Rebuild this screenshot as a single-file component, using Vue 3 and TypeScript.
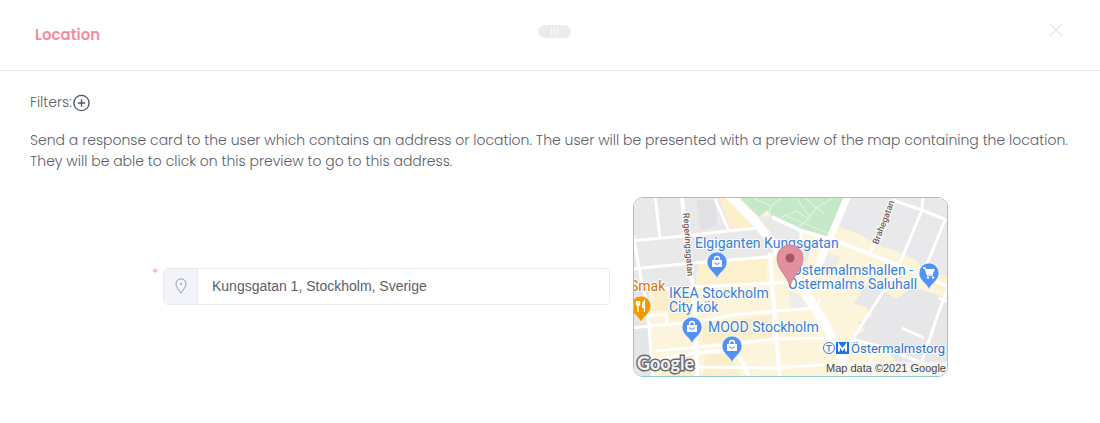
<script setup lang="ts">
import { ref } from 'vue'

interface Pin {
  x: number
  y: number
  kind: 'bag' | 'cart' | 'food'
}

interface Place {
  x: number
  y: number
  text: string
  kind: string
}

const address = ref('Kungsgatan 1, Stockholm, Sverige')

const minorRoads: string[] = [
  'M22 -2L27 41',
  'M-2 44L60 38L122 31',
  'M0 38L8 82L12 98L16 130L20 182',
  'M-2 72L60 66L135 60',
  'M82 2L96 34',
  'M28 92L60 90L162 85',
  'M-2 131L17 129M14 119L33 117L34 127',
  'M17 129L64 125L100 118L142 114L183 111L187 102',
  'M22 154L90 148L142 142L205 141',
  'M60 170L142 171L200 167',
  'M147 48L138 62',
  'M168 35L168 46',
  'M259 4L237 56',
  'M259 3L289 13L316 24',
  'M290 -2L289 13L264 73L219 143',
  'M312 23L296 62L286 84',
  'M316 88L304 120L283 182',
  'M306 101L316 105',
  'M269 131L291 141',
  'M219 142L252 151L287 165L316 177',
  'M245 150L230 178',
]

const midRoads: string[] = [
  'M49 -2L52 33L60 92L63 138L64 182',
  'M137 56L140 100L143 138L147 182',
  'M139 20L169 34L209 46L252 63L316 90',
  'M22 164L60 156L92 153Q103 153 108 163L116 180',
]

const pins: Pin[] = [
  { x: 84, y: 65, kind: 'bag' },
  { x: 296, y: 76, kind: 'cart' },
  { x: 59, y: 130, kind: 'bag' },
  { x: 99, y: 149, kind: 'bag' },
  { x: 8, y: 109, kind: 'food' },
]

const places: Place[] = [
  { x: 62, y: 51, text: 'Elgiganten Kungsgatan', kind: 'shop' },
  { x: 159, y: 78, text: 'Östermalmshallen -', kind: 'shop' },
  { x: 155, y: 92, text: 'Östermalms Saluhall', kind: 'shop' },
  { x: 36, y: 101, text: 'IKEA Stockholm', kind: 'shop' },
  { x: 36, y: 115, text: 'City kök', kind: 'shop' },
  { x: 75, y: 135, text: 'MOOD Stockholm', kind: 'shop' },
  { x: 218, y: 156, text: 'Östermalmstorg', kind: 'station' },
  { x: -3, y: 94, text: 'Smak', kind: 'eat' },
]
</script>

<template>
  <section class="card">
    <header class="card-header">
      <h1 class="title">Location</h1>
      <button class="drag" type="button" aria-label="Move card">
        <i></i><i></i><i></i>
      </button>
      <button class="close" type="button" aria-label="Close">
        <svg viewBox="0 0 14 14" width="14" height="14"><path d="M1 1L13 13M13 1L1 13" /></svg>
      </button>
    </header>

    <div class="card-body">
      <div class="filters">
        <span>Filters:</span>
        <button class="add" type="button" aria-label="Add filter">
          <svg viewBox="0 0 18 18" width="18" height="18">
            <circle cx="9.5" cy="9" r="7.6" />
            <path d="M9.5 5.2V12.8M5.7 9H13.3" />
          </svg>
        </button>
      </div>

      <p class="intro">
        Send a response card to the user which contains an address or location. The user will be
        presented with a preview of the map containing the location. They will be able to click on
        this preview to go to this address.
      </p>

      <div class="row">
        <div class="field">
          <label class="required" for="address" aria-label="Address">*</label>
          <div class="input-group">
            <span class="prefix">
              <svg viewBox="0 0 12 16" width="12" height="16">
                <path d="M6 15.2C4.6 12.6 1 9.4 1 5.9A5 5 0 0 1 11 5.9C11 9.4 7.4 12.6 6 15.2Z" />
                <circle cx="6" cy="5.8" r="0.7" />
              </svg>
            </span>
            <input id="address" v-model="address" type="text" />
          </div>
        </div>

        <div class="map">
          <svg viewBox="1 1 313 178" role="img" aria-label="Map of Kungsgatan 1, Stockholm">
            <rect width="315" height="180" fill="#fdf4dc" />
            <path d="M0 0H98L122 25L148 56L135 58L100 62L66 66L62 90H0Z" fill="#e9e9ea" />
            <path d="M64 3H82L84 29L67 34Z" fill="#dfe1e4" />
            <path d="M86 0H100L120 25L117 30L98 33Z" fill="#fcefca" />
            <path d="M66 68L134 61V85L64 89Z" fill="#fdf0cd" />
            <path d="M0 90H12L16 96V118L20 180H0Z" fill="#e5e6e9" />
            <path d="M120 22L138 18L168 34V45L178 51L172 72L150 55Z" fill="#e9e9ea" />
            <path d="M190 54L207 60L199 78L185 76Z" fill="#ececec" />
            <path d="M156 94L166 98L176 111L158 114Z" fill="#ececec" />
            <path d="M213 0H315V88L292 78L284 64L263 54L250 50L239 45L226 37L206 30Z" fill="#e9e9eb" />
            <path d="M286 70L315 80V98L292 84Z" fill="#fdf0cd" />
            <path d="M233 88L249 93L263 102L280 90L315 101V180H276L252 151L218 142L232 133L225 126L239 119L233 110L221 107Z" fill="#e7e7e9" />
            <path d="M22 95H58L61 121L37 123L34 114H18ZM70 126L139 118V140L69 147ZM28 166L60 159V180H28ZM72 158L95 157L109 180H70Z" fill="#fbeecb" />
            <path d="M106 0H213L199 41L175 36L147 22L139 19L134 13L126 20Z" fill="#c5e8c6" />
            <g class="path">
              <path d="M120 1L138 9L149 1M138 9L136 18M147 21L163 14L176 22L183 11L200 1M163 0L178 22M171 0L191 17M151 18L165 24L200 38M176 22L166 30" />
            </g>
            <g class="road minor"><path v-for="d in minorRoads" :key="d" :d="d" /></g>
            <g class="road middle"><path v-for="d in midRoads" :key="d" :d="d" /></g>
            <path class="road avenue" d="M216 -4L184 72L170 88" />
            <path class="road major" d="M94 -4L122 24L145 52L170 92L193 129L221 182" />

            <text class="street" transform="translate(50 16) rotate(86)">Regeringsgatan</text>
            <text class="street" transform="translate(245 48) rotate(-69)">Brahegatan</text>

            <g v-for="pin in pins" :key="`${pin.x}-${pin.y}`" :transform="`translate(${pin.x} ${pin.y})`">
              <path
                d="M0 17C-1 11 -10 8 -10 0A10 10 0 0 1 10 0C10 8 1 11 0 17Z"
                :fill="pin.kind === 'food' ? '#f29900' : '#5491f5'"
                stroke="#fff"
                stroke-width="0.6"
              />
              <g v-if="pin.kind === 'bag'">
                <path d="M-5 -2H5V5H-5Z" fill="#fff" />
                <path d="M-2.5 -2V-3A2.5 2.5 0 0 1 2.5 -3V-2" fill="none" stroke="#fff" stroke-width="1.3" />
                <path d="M-2.5 0.5Q0 4 2.5 0.5" fill="none" stroke="#5491f5" stroke-width="1.2" />
              </g>
              <g v-else-if="pin.kind === 'cart'">
                <path d="M-6 -5H-4L-1.5 2H4" fill="none" stroke="#fff" stroke-width="1.4" />
                <path d="M-3.5 -4H6L4 1H-2Z" fill="#fff" />
                <circle cx="-1" cy="4.5" r="1.2" fill="#fff" />
                <circle cx="4" cy="4.5" r="1.2" fill="#fff" />
              </g>
              <path
                v-else
                d="M-4.5 -5V-1.5Q-3 0.5 -1.5 -1.5V-5M-3 -5V6M3.4 6V-5Q1 -3 1.8 1H3.4"
                fill="none"
                stroke="#fff"
                stroke-width="1.4"
              />
            </g>

            <text v-for="p in places" :key="p.text" :x="p.x" :y="p.y" :class="['place', p.kind]">{{ p.text }}</text>

            <circle cx="196" cy="151" r="5.5" fill="#fff" stroke="#3b78d8" />
            <path d="M193.2 148.5H198.8M196 148.5V154.5" stroke="#3b78d8" stroke-width="1.2" />
            <rect x="203" y="145" width="13" height="12" fill="#1a73e8" />
            <path d="M206 154.5V148L209.5 152.5L213 148V154.5" fill="none" stroke="#fff" stroke-width="2" />

            <path d="M157 90C155 79 144 73 144 61A13 13 0 0 1 170 61C170 73 159 79 157 90Z" fill="#e2909d" stroke="#c97d8b" stroke-width="0.8" />
            <circle cx="157" cy="61" r="4.5" fill="#a35765" />

            <text class="logo" x="4" y="173">Google</text>
            <rect x="194" y="165" width="121" height="15" fill="#f7f6f1" fill-opacity="0.8" />
            <text class="credit" x="313" y="175" text-anchor="end">Map data ©2021 Google</text>
          </svg>
        </div>
      </div>
    </div>
  </section>
</template>

<style>
body {
  margin: 0;
  background: #fff;
}
</style>

<style scoped>
.card {
  color: #5d5e69;
  font-family: Poppins, Inter, 'Open Sans', sans-serif;
  font-size: 14px;
  font-weight: 300;
}

button {
  padding: 0;
  border: 0;
  background: none;
  cursor: pointer;
}

.card-header {
  display: grid;
  grid-template-columns: 1fr auto 1fr;
  align-items: center;
  height: 70px;
  padding: 0 27px 0 35px;
  border-bottom: 1px solid #ebebeb;
}

.title {
  margin: 0;
  color: #f48f9f;
  font-size: 15px;
  font-weight: 600;
  line-height: 24px;
}

.drag {
  display: flex;
  justify-content: center;
  align-items: center;
  gap: 2px;
  width: 33px;
  height: 13px;
  margin-bottom: 8px;
  border-radius: 7px;
  background: #ececec;
}

.drag i {
  width: 1px;
  height: 8px;
  background: #fafafa;
}

.close {
  justify-self: end;
  height: 14px;
  margin: 0 10px 10px 0;
}

.close svg,
.add svg,
.map svg {
  display: block;
}

.close path {
  fill: none;
  stroke: #e6e6ea;
  stroke-width: 1.2;
}

.card-body {
  padding: 21px 30px 46px;
}

.filters {
  display: flex;
  align-items: center;
  line-height: 21px;
}

.add svg {
  fill: none;
  stroke: #565762;
  stroke-width: 1.4;
}

.intro {
  margin: 17px 0 25px;
  line-height: 21px;
}

.row {
  display: flex;
  align-items: center;
  gap: 23px;
  max-width: 796px;
  margin: 0 auto;
}

.field {
  display: flex;
  flex: 1;
  align-items: flex-start;
  padding-bottom: 2px;
}

.required {
  width: 11px;
  color: #f79aa8;
  font-size: 14px;
  line-height: 12px;
}

.input-group {
  display: flex;
  flex: 1;
  box-sizing: border-box;
  height: 37px;
  overflow: hidden;
  border: 1px solid #ebebee;
  border-radius: 5px;
}

.prefix {
  display: flex;
  align-items: center;
  justify-content: center;
  width: 33px;
  border-right: 1px solid #e9e9ee;
  background: #f3f4f9;
}

.prefix svg {
  fill: none;
  stroke: #9b9da8;
}

.input-group input {
  flex: 1;
  min-width: 0;
  padding: 0 14px;
  border: 0;
  outline: 0;
  background: #fff;
  color: #5d5e69;
  font: 14px 'Liberation Sans', sans-serif;
}

.map {
  box-sizing: border-box;
  width: 315px;
  overflow: hidden;
  border: 1px solid #8fcbc8;
  border-radius: 10px;
}

.map svg {
  width: 100%;
  height: auto;
}

.path path {
  fill: none;
  stroke: #e0f3e0;
  stroke-width: 1.2;
}

.road {
  fill: none;
  stroke: #fff;
  stroke-linejoin: round;
}

.minor {
  stroke-width: 3;
}

.middle {
  stroke-width: 4;
}

.avenue {
  stroke-width: 7;
}

.major {
  stroke-width: 9;
}

.map text {
  font-family: Roboto, sans-serif;
  font-weight: 400;
}

.map .place {
  font-size: 14px;
  paint-order: stroke;
  stroke: #fff;
  stroke-width: 2px;
  stroke-opacity: 0.8;
}

.shop {
  fill: #397fdf;
}

.map .station {
  fill: #2f73d5;
  font-size: 13px;
}

.eat {
  fill: #d57511;
}

.map .street {
  fill: #705b5b;
  font-size: 9px;
  font-weight: 500;
  paint-order: stroke;
  stroke: #fff;
  stroke-width: 2px;
}

.map .credit {
  fill: #444;
  font-family: 'Liberation Sans', sans-serif;
  font-size: 11px;
}

.map .logo {
  fill: #f2f2f2;
  font-family: Lato, sans-serif;
  font-size: 18px;
  font-weight: 700;
  paint-order: stroke;
  stroke: #6b6b6b;
  stroke-width: 3px;
}
</style>
